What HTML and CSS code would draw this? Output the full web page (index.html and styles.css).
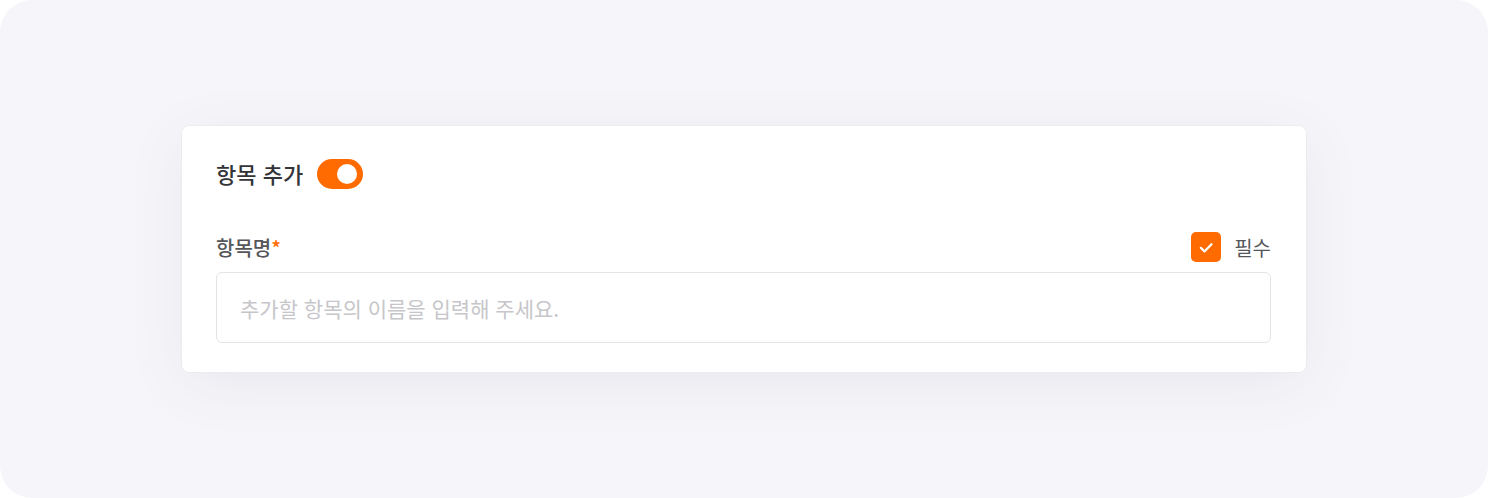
FILE: index.html
```html
<!DOCTYPE html>
<html lang="ko">
<head>
<meta charset="utf-8">
<link rel="stylesheet" href="styles.css">
</head>
<body>
<div class="stage">
  <div class="card">
    <div class="title-row">
      <h2 class="title">항목 추가</h2>
      <span class="toggle"><span class="knob"></span></span>
    </div>
    <div class="label-row">
      <span class="label">항목명<span class="req">*</span></span>
      <label class="check">
        <span class="box">
          <svg width="30" height="30" viewBox="0 0 30 30"><path d="M9.8 15.8l3.7 3.6 7-7.2" fill="none" stroke="#fff" stroke-width="2.2" stroke-linecap="round" stroke-linejoin="round"/></svg>
        </span>
        <span class="check-text">필수</span>
      </label>
    </div>
    <input class="field" type="text" placeholder="추가할 항목의 이름을 입력해 주세요.">
  </div>
</div>
</body>
</html>
```
FILE: styles.css
```css
html, body {
  margin: 0;
  padding: 0;
  background: #ffffff;
}
body {
  font-family: "Noto Sans CJK KR", "Noto Sans", sans-serif;
}
.stage {
  width: 1488px;
  height: 498px;
  box-sizing: border-box;
  background: #f6f6fa;
  border-radius: 32px;
  padding-top: 125px;
  padding-left: 181px;
}
.card {
  width: 1126px;
  height: 248px;
  box-sizing: border-box;
  background: #ffffff;
  border: 1px solid #ececf0;
  border-radius: 8px;
  box-shadow: 0 12px 60px rgba(40, 40, 80, 0.07);
  padding: 33px 35px 0 34px;
}
.title-row {
  display: flex;
  align-items: center;
  height: 30px;
  gap: 14px;
}
.title {
  margin: 0;
  font-size: 22px;
  font-weight: 500;
  color: #333438;
  line-height: 30px;
  position: relative;
  top: -1px;
}
.toggle {
  width: 46px;
  height: 30px;
  background: #ff6b00;
  border-radius: 15px;
  position: relative;
}
.knob {
  position: absolute;
  right: 6px;
  top: 5px;
  width: 20px;
  height: 20px;
  border-radius: 50%;
  background: #fff;
}
.label-row {
  display: flex;
  align-items: center;
  justify-content: space-between;
  margin-top: 43px;
  height: 30px;
}
.label {
  font-size: 20px;
  color: #55565a;
  font-weight: 500;
}
.req {
  color: #ff6b00;
}
.check {
  display: flex;
  align-items: center;
  gap: 13px;
}
.box {
  width: 30px;
  height: 30px;
  border-radius: 5px;
  background: #ff6b00;
  display: flex;
}
.check-text {
  font-size: 20px;
  color: #55565a;
}
.field {
  display: block;
  margin-top: 10px;
  width: 100%;
  height: 71px;
  box-sizing: border-box;
  border: 1px solid #e4e4e8;
  border-radius: 6px;
  padding: 0 23px;
  font-family: "Noto Sans CJK KR", "Noto Sans", sans-serif;
  font-size: 21px;
  color: #333;
  outline: none;
}
.field::placeholder {
  color: #c6c6ca;
}
```
